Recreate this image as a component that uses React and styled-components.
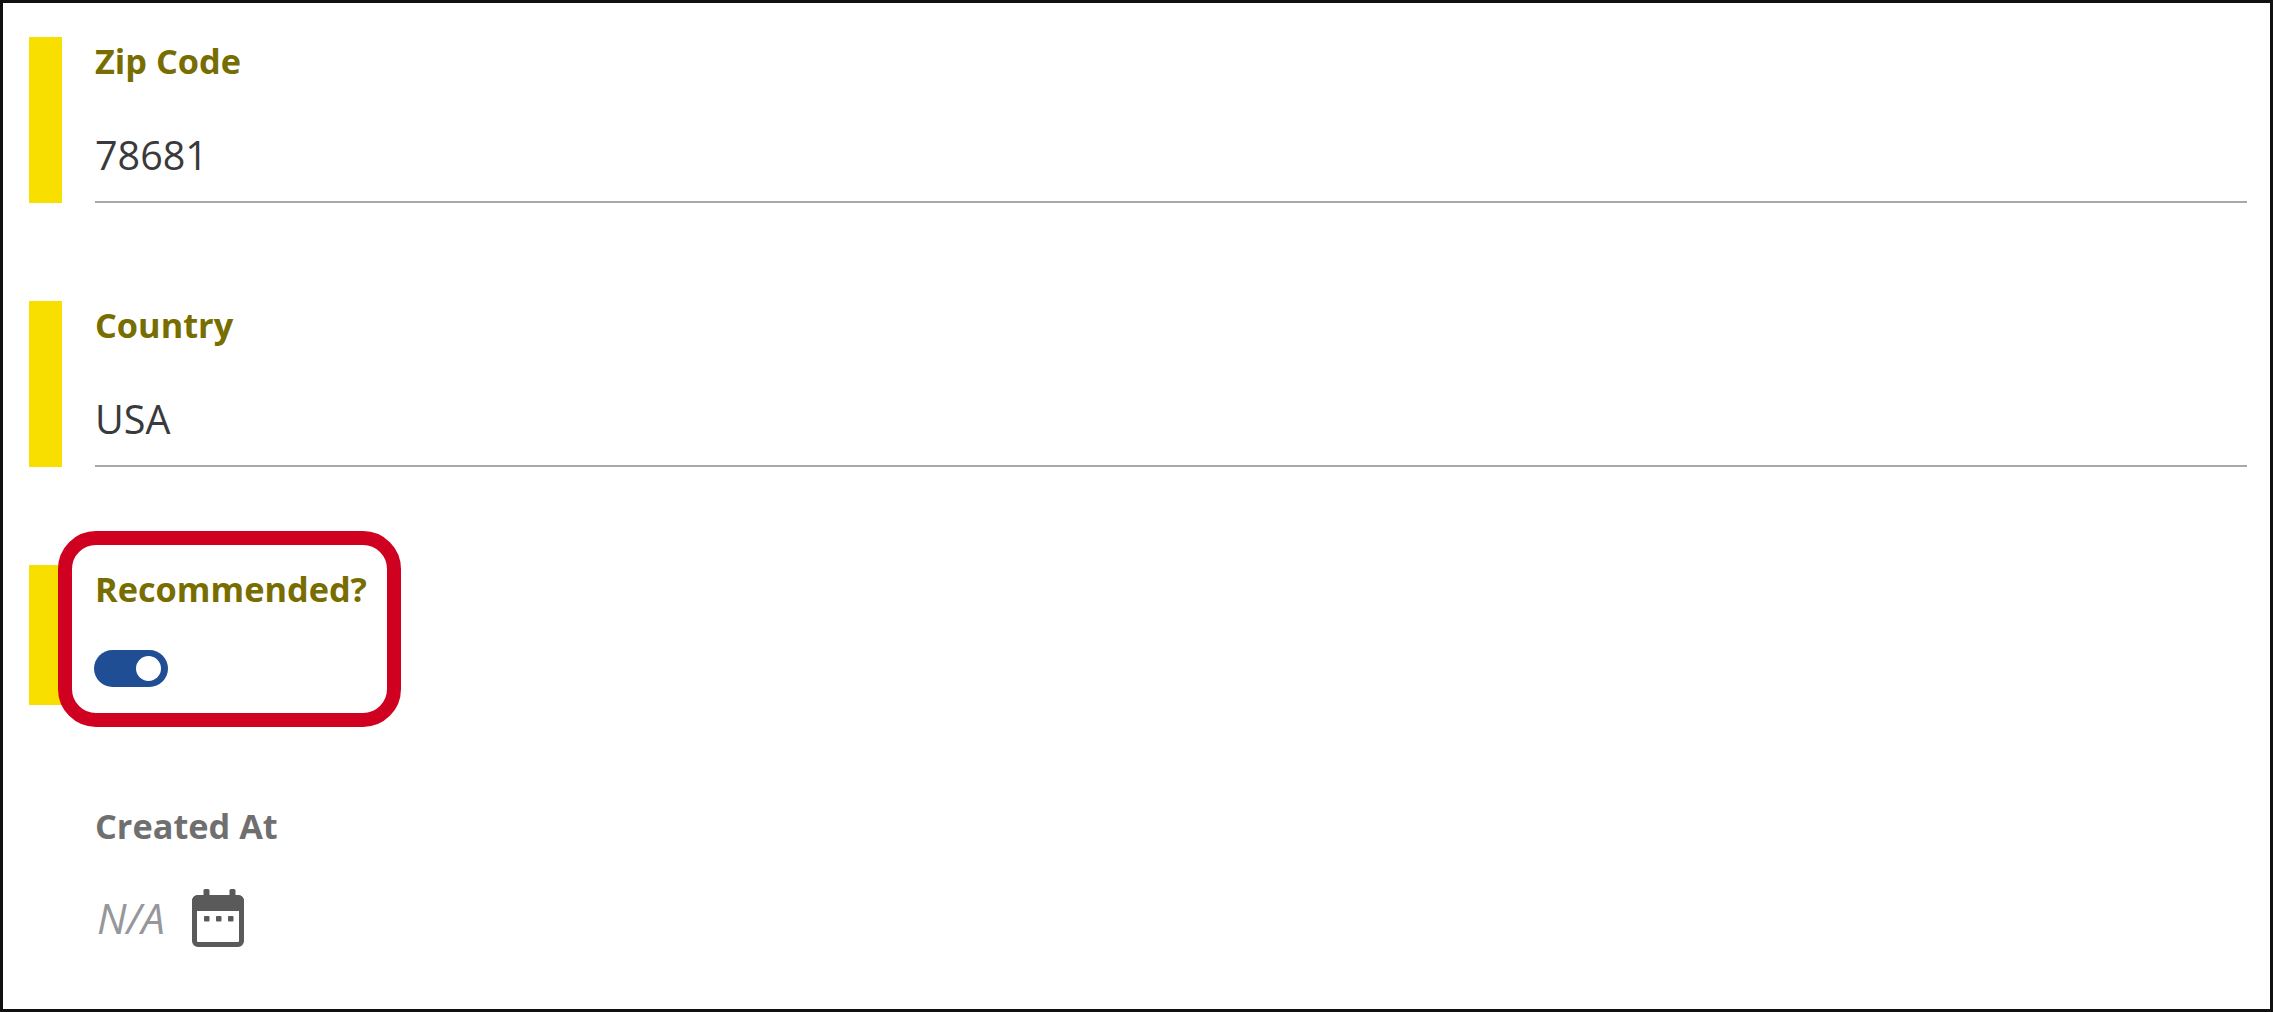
import React from "react";
import styled, { createGlobalStyle } from "styled-components";

const Global = createGlobalStyle`
  html, body { margin: 0; padding: 0; background: #fff; }
  body { font-family: "Open Sans", "Liberation Sans", sans-serif; }
`;

const Frame = styled.div`
  position: relative;
  box-sizing: border-box;
  width: 2273px;
  height: 1012px;
  border: 3px solid #111;
  background: #fff;
  padding: 34px 23px 0 26px;
  display: flex;
  flex-direction: column;
`;

const Field = styled.section`
  display: flex;
  height: ${(p) => p.$height}px;
  margin-bottom: ${(p) => p.$gap}px;
`;

const Marker = styled.div`
  flex: 0 0 33px;
  background: ${(p) => (p.$on ? "#f9df00" : "transparent")};
`;

const Body = styled.div`
  flex: 1;
  margin-left: 33px;
  display: flex;
  flex-direction: column;
  border-bottom: ${(p) => (p.$line ? "2px solid #a9a9ab" : "none")};
`;

const Label = styled.label`
  font-size: 34.3px;
  line-height: 40px;
  font-weight: 700;
  color: ${(p) => (p.$muted ? "#6f6f70" : "#776d00")};
  margin-top: 4px;
`;

const Value = styled.div`
  font-size: 39.5px;
  line-height: 50px;
  color: #3a3a3c;
  margin-top: 49px;
`;

const Track = styled.button`
  appearance: none;
  display: block;
  border: 0;
  padding: 0;
  position: relative;
  width: 74px;
  height: 37px;
  border-radius: 19px;
  background: #1f4e95;
  margin: 41px 0 0 -1px;
`;

const Knob = styled.span`
  position: absolute;
  right: 7px;
  top: 6px;
  width: 25px;
  height: 25px;
  border-radius: 50%;
  background: #fff;
`;

const DateRow = styled.div`
  display: flex;
  align-items: center;
  gap: 27px;
  margin-top: 43px;
`;

const Empty = styled.span`
  font-size: 42px;
  line-height: 58px;
  font-style: italic;
  color: #97979b;
  margin-left: 2px;
`;

const Callout = styled.div`
  position: absolute;
  left: 55px;
  top: 528px;
  box-sizing: border-box;
  width: 343px;
  height: 196px;
  border: 14px solid #cf0020;
  border-radius: 38px;
`;

const CalendarIcon = () => (
  <svg width="52" height="58" viewBox="0 0 52 58" fill="none" aria-hidden="true">
    <rect x="11.5" y="0" width="6" height="9" rx="1.5" fill="#5a5a5b" />
    <rect x="37.5" y="0" width="6" height="9" rx="1.5" fill="#5a5a5b" />
    <path d="M6 6h40a6 6 0 0 1 6 6v10H0V12a6 6 0 0 1 6-6z" fill="#5a5a5b" />
    <rect x="2.5" y="8.5" width="47" height="47" rx="3.5" stroke="#5a5a5b" strokeWidth="5" />
    <rect x="12" y="27" width="5.5" height="5.5" rx="1" fill="#5a5a5b" />
    <rect x="24" y="27" width="5.5" height="5.5" rx="1" fill="#5a5a5b" />
    <rect x="36" y="27" width="5.5" height="5.5" rx="1" fill="#5a5a5b" />
  </svg>
);

export default function App() {
  return (
    <>
      <Global />
      <Frame>
        <Field $height={166} $gap={98}>
          <Marker $on />
          <Body $line>
            <Label>Zip Code</Label>
            <Value>78681</Value>
          </Body>
        </Field>
        <Field $height={166} $gap={98}>
          <Marker $on />
          <Body $line>
            <Label>Country</Label>
            <Value>USA</Value>
          </Body>
        </Field>
        <Field $height={140} $gap={97}>
          <Marker $on />
          <Body>
            <Label>Recommended?</Label>
            <Track aria-label="Recommended"><Knob /></Track>
          </Body>
        </Field>
        <Field $height={160} $gap={0}>
          <Marker />
          <Body>
            <Label $muted>Created At</Label>
            <DateRow>
              <Empty>N/A</Empty>
              <CalendarIcon />
            </DateRow>
          </Body>
        </Field>
        <Callout />
      </Frame>
    </>
  );
}
